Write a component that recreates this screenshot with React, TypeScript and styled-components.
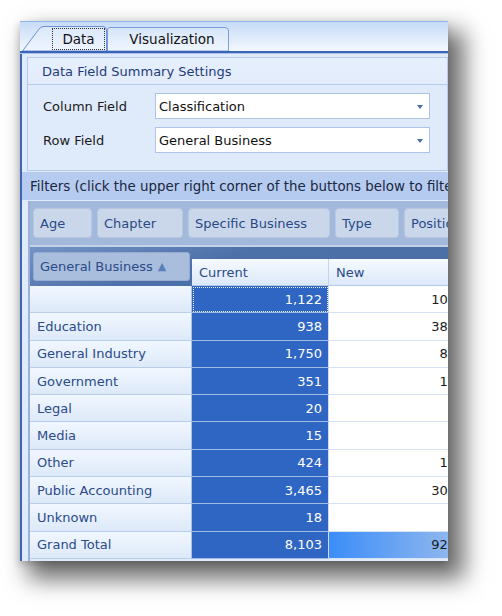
import React from 'react'
import styled, { createGlobalStyle } from 'styled-components'

const GlobalStyle = createGlobalStyle`
  html, body {
    margin: 0;
    padding: 0;
    background: #ffffff;
  }
  body {
    font-family: "DejaVu Sans", "Liberation Sans", sans-serif;
    font-size: 13px;
  }
`

const filters = [
  { title: 'Age', width: 59 },
  { title: 'Chapter', width: 86 },
  { title: 'Specific Business', width: 142 },
  { title: 'Type', width: 64 },
  { title: 'Position', width: 90 },
]

const rows = [
  { name: '', current: '1,122', next: '104', focus: true },
  { name: 'Education', current: '938', next: '386' },
  { name: 'General Industry', current: '1,750', next: '86' },
  { name: 'Government', current: '351', next: '13' },
  { name: 'Legal', current: '20', next: '4' },
  { name: 'Media', current: '15', next: '3' },
  { name: 'Other', current: '424', next: '14' },
  { name: 'Public Accounting', current: '3,465', next: '309' },
  { name: 'Unknown', current: '18', next: '2' },
  { name: 'Grand Total', current: '8,103', next: '921', total: true },
]

const App = () => {
  return (
    <Page>
      <GlobalStyle />
      <Window>
        <TabStrip>
          <Tab active width={85}>
            <TabShape viewBox="0 0 85 25" preserveAspectRatio="none">
              <defs>
                <linearGradient id="tabA" x1="0" y1="0" x2="0" y2="1">
                  <stop offset="0" stopColor="#dbe8fb" />
                  <stop offset="1" stopColor="#eef5fe" />
                </linearGradient>
              </defs>
              <path d="M0.5 25 L17 3 Q19 0.5 22 0.5 L81 0.5 Q84.5 0.5 84.5 4 L84.5 25 Z" fill="url(#tabA)" stroke="#6c90d2" />
            </TabShape>
            <FocusBox>Data</FocusBox>
          </Tab>
          <Tab width={122}>
            <TabShape viewBox="0 0 122 24" preserveAspectRatio="none">
              <defs>
                <linearGradient id="tabB" x1="0" y1="0" x2="0" y2="1">
                  <stop offset="0" stopColor="#d6e5fa" />
                  <stop offset="1" stopColor="#f0f6fe" />
                </linearGradient>
              </defs>
              <path d="M0.5 24 L0.5 3 Q0.5 0.5 3 0.5 L118 0.5 Q121.5 0.5 121.5 4 L121.5 24 Z" fill="url(#tabB)" stroke="#7a9ed9" />
            </TabShape>
            <TabLabel>Visualization</TabLabel>
          </Tab>
        </TabStrip>
        <TabLine />
        <TabBody>
          <GroupBox>
            <GroupHeader>Data Field Summary Settings</GroupHeader>
            <FieldRow>
              <FieldLabel>Column Field</FieldLabel>
              <Combo>
                Classification
                <ComboArrow />
              </Combo>
            </FieldRow>
            <FieldRow>
              <FieldLabel>Row Field</FieldLabel>
              <Combo>
                General Business
                <ComboArrow />
              </Combo>
            </FieldRow>
          </GroupBox>
          <FilterHint>Filters (click the upper right corner of the buttons below to filter)</FilterHint>
          <Pivot>
            <FilterArea>
              {filters.map((f) => (
                <FilterButton key={f.title} width={f.width}>{f.title}</FilterButton>
              ))}
            </FilterArea>
            <HeaderArea>
              <RowFieldButton>
                General Business <SortMark>▲</SortMark>
              </RowFieldButton>
              <ColumnHeader>Current</ColumnHeader>
              <ColumnHeader>New</ColumnHeader>
            </HeaderArea>
            {rows.map((r, i) => (
              <GridRow key={i}>
                <RowHeader>{r.name}</RowHeader>
                <CurrentCell focus={r.focus}>{r.current}</CurrentCell>
                <NewCell total={r.total}>{r.next}</NewCell>
              </GridRow>
            ))}
          </Pivot>
        </TabBody>
      </Window>
    </Page>
  )
}

export default App

const Page = styled.div`
  width: 502px;
  height: 616px;
  padding: 21px 0 0 20px;
  box-sizing: border-box;
  overflow: hidden;
`
const Window = styled.div`
  width: 428px;
  height: 540px;
  overflow: hidden;
  background: #dbe7f8;
  box-shadow: 12px 14px 22px 4px rgba(0, 0, 0, 0.58), -1px 3px 7px rgba(0, 0, 0, 0.18);
  display: flex;
  flex-direction: column;
`
const TabStrip = styled.div`
  height: 30px;
  box-sizing: border-box;
  border-top: 1px solid #94b3e6;
  background: linear-gradient(#c6dbf7, #f3f8fe);
  display: flex;
  align-items: flex-end;
  padding-left: 2px;
  flex-shrink: 0;
`
const Tab = styled.div<{ active?: boolean; width: number }>`
  position: relative;
  width: ${(p) => p.width}px;
  height: ${(p) => (p.active ? 25 : 24)}px;
  display: flex;
  align-items: center;
  justify-content: ${(p) => (p.active ? 'flex-end' : 'center')};
  padding-right: ${(p) => (p.active ? 2 : 0)}px;
  box-sizing: border-box;
  color: #111;
  font-size: 13.5px;
`
const TabShape = styled.svg`
  position: absolute;
  inset: 0;
  width: 100%;
  height: 100%;
`
const FocusBox = styled.span`
  position: relative;
  width: 53px;
  height: 22px;
  box-sizing: border-box;
  border: 1px dotted #333;
  display: flex;
  align-items: center;
  justify-content: center;
`
const TabLabel = styled.span`
  position: relative;
  padding-left: 8px;
`
const TabLine = styled.div`
  height: 2px;
  background: #3b63b6;
  border-bottom: 1px solid #a9c3ee;
  flex-shrink: 0;
`
const TabBody = styled.div`
  flex: 1;
  border-left: 2px solid #3b63b6;
  display: flex;
  flex-direction: column;
  background: #dfeafa;
`
const GroupBox = styled.div`
  margin: 3px 0 1px 5px;
  border: 1px solid #b5caec;
  background: #dfeafa;
  padding-bottom: 17px;
`
const GroupHeader = styled.div`
  height: 26px;
  border-bottom: 1px solid #b5caec;
  background: linear-gradient(#e6effc, #e2ecfb);
  display: flex;
  align-items: center;
  padding-left: 14px;
  color: #1f3c7a;
  font-size: 13px;
`
const FieldRow = styled.div`
  display: flex;
  align-items: center;
  margin-top: 8px;
  padding: 0 17px 0 15px;
  &:first-of-type {
    margin-top: 9px;
  }
`
const FieldLabel = styled.div`
  width: 112px;
  color: #1a1a1a;
`
const Combo = styled.div`
  position: relative;
  flex: 1;
  height: 26px;
  box-sizing: border-box;
  border: 1px solid #adc3e7;
  background: #fff;
  display: flex;
  align-items: center;
  padding-left: 3px;
  color: #111;
`
const ComboArrow = styled.span`
  position: absolute;
  right: 6px;
  top: 11px;
  border-left: 3.5px solid transparent;
  border-right: 3.5px solid transparent;
  border-top: 4px solid #4a6ea8;
`
const FilterHint = styled.div`
  height: 28px;
  background: #b5cbef;
  display: flex;
  align-items: center;
  padding-left: 8px;
  white-space: nowrap;
  overflow: hidden;
  color: #1b2740;
  font-size: 13.4px;
  flex-shrink: 0;
`
const Pivot = styled.div`
  margin: 1px 0 0 6px;
  border-left: 2px solid #9bb2d8;
  display: flex;
  flex-direction: column;
  width: 440px;
  flex: 1;
`
const FilterArea = styled.div`
  height: 46px;
  box-sizing: border-box;
  background: #a3b9dc;
  border-bottom: 2px solid #c4d2e7;
  display: flex;
  align-items: center;
  gap: 5px;
  padding-left: 3px;
  white-space: nowrap;
`
const FilterButton = styled.div<{ width: number }>`
  flex-shrink: 0;
  width: ${(p) => p.width}px;
  height: 30px;
  box-sizing: border-box;
  border: 1px solid #b8c8e0;
  border-radius: 4px;
  background: #cad7eb;
  display: flex;
  align-items: center;
  padding-left: 6px;
  color: #284a86;
  overflow: hidden;
`
const HeaderArea = styled.div`
  height: 39px;
  display: grid;
  grid-template-columns: 162px 137px 133px;
  align-items: end;
  background: linear-gradient(165deg, #7593c4 0%, #5f80b6 22%, #4c70a8 40%, #4a6ea6 100%);
`
const RowFieldButton = styled.div`
  align-self: start;
  margin: 5px 0 0 3px;
  width: 157px;
  height: 29px;
  box-sizing: border-box;
  border: 1px solid #95acd2;
  border-radius: 3px;
  background: #a9bddc;
  display: flex;
  align-items: center;
  padding-left: 6px;
  color: #2a4b88;
  white-space: nowrap;
`
const SortMark = styled.span`
  color: #5b7fb7;
  font-size: 11px;
  margin-left: 5px;
`
const ColumnHeader = styled.div`
  height: 27px;
  box-sizing: border-box;
  border-right: 1px solid #c2d4ee;
  border-bottom: 1px solid #b5c9e8;
  background: linear-gradient(#f6faff, #dce8f9);
  display: flex;
  align-items: center;
  padding-left: 7px;
  color: #2a4b88;
`
const GridRow = styled.div`
  height: 27.3px;
  display: grid;
  grid-template-columns: 162px 137px 133px;
  flex-shrink: 0;
`
const RowHeader = styled.div`
  box-sizing: border-box;
  border-right: 1px solid #a9c1e3;
  border-bottom: 1px solid #b9cde9;
  background: linear-gradient(#f1f7ff, #dde9f9);
  display: flex;
  align-items: center;
  padding-left: 7px;
  color: #2a4b88;
  white-space: nowrap;
`
const CurrentCell = styled.div<{ focus?: boolean }>`
  box-sizing: border-box;
  background: #2f66c3;
  border-right: 1px solid #cfdcf0;
  border-bottom: 1px solid #9fbbe6;
  outline: ${(p) => (p.focus ? '1px dotted #e8eefa' : 'none')};
  outline-offset: -2px;
  display: flex;
  align-items: center;
  justify-content: flex-end;
  padding-right: 6px;
  color: #ffffff;
`
const NewCell = styled.div<{ total?: boolean }>`
  box-sizing: border-box;
  background: ${(p) => (p.total ? 'linear-gradient(90deg, #3b8df8, #97bbee)' : '#ffffff')};
  border-bottom: 1px solid #d6e3f5;
  display: flex;
  align-items: center;
  justify-content: flex-end;
  padding-right: 6px;
  color: #1a1a1a;
`
